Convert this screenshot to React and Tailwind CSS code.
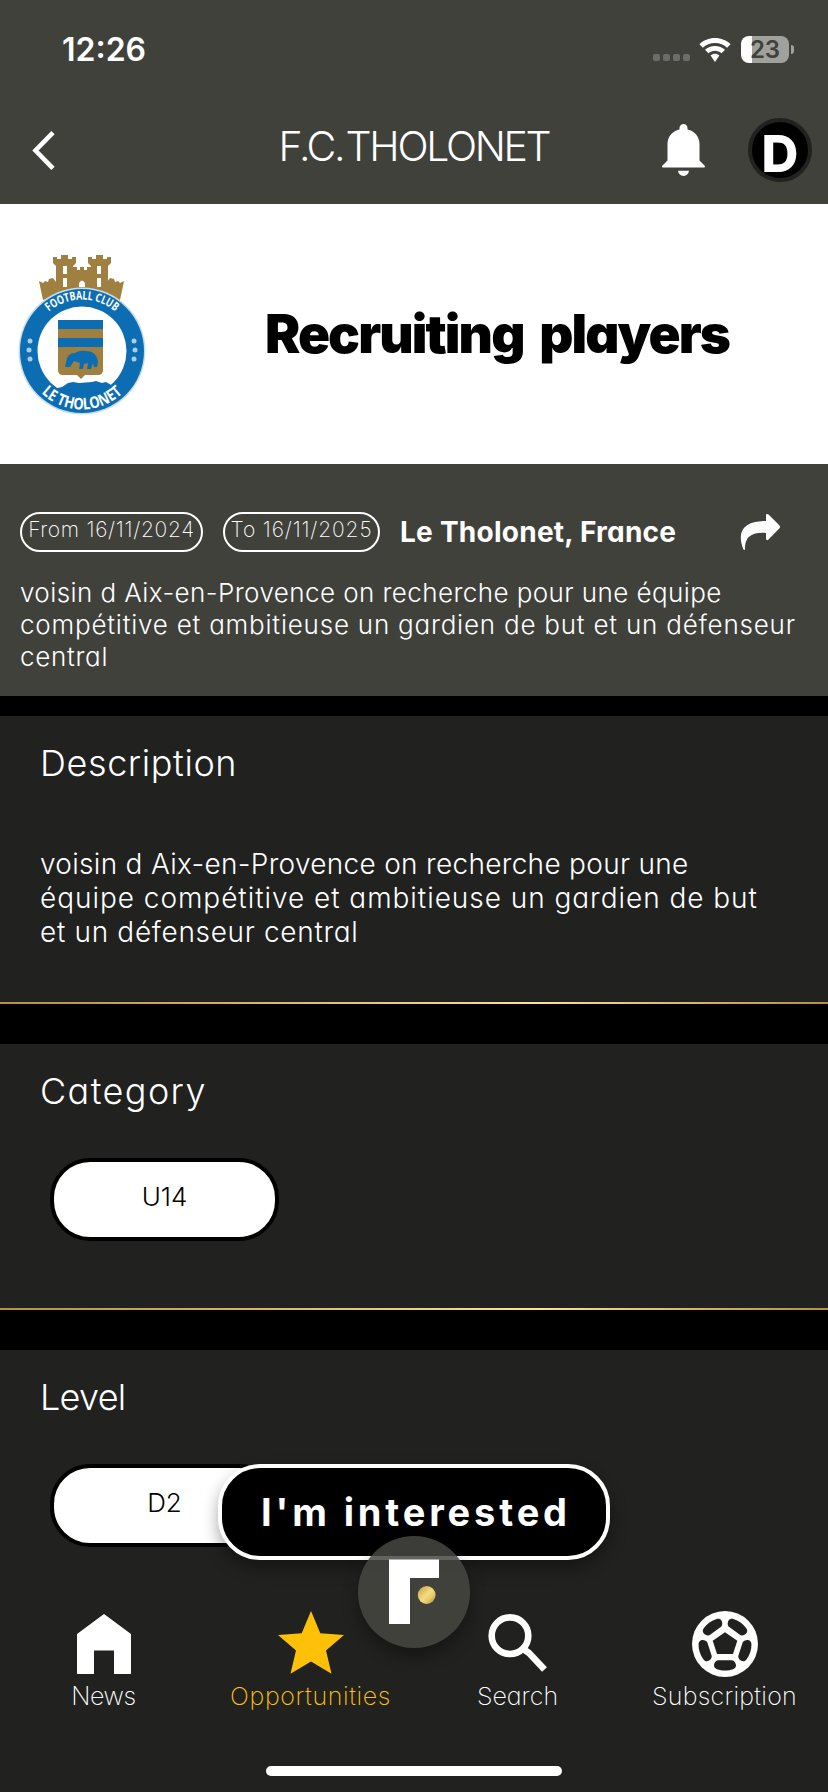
import React from 'react';

const SUMMARY = [
  { text: 'voisin d Aix-en-Provence on recherche pour une équipe', spacing: 'tracking-[0.420px]' },
  { text: 'compétitive et ambitieuse un gardien de but et un défenseur', spacing: 'tracking-[0.780px]' },
  { text: 'central', spacing: 'tracking-[0.700px]' },
];

const DESCRIPTION = [
  { text: 'voisin d Aix-en-Provence on recherche pour une', spacing: 'tracking-[0.300px]' },
  { text: 'équipe compétitive et ambitieuse un gardien de but', spacing: 'tracking-[0.960px]' },
  { text: 'et un défenseur central', spacing: 'tracking-[0.680px]' },
];

function StatusBar() {
  return (
    <div className="flex h-24 items-start justify-between pl-[62px] pr-[34px]">
      <span className="mt-[34px] text-[32px] leading-8 font-semibold">12:26</span>
      <div className="mt-9 flex h-[27px] items-center">
        <div className="mt-[16px] mr-[9px] flex gap-[3px]">
          {[0, 1, 2, 3].map((dot) => (
            <span key={dot} className="size-[7px] rounded-[2px] bg-[#6c6c68]" />
          ))}
        </div>
        <svg className="mr-2.5 h-6 w-8" viewBox="0 0 32 24" fill="#fff">
          <path d="M16 0C22 0 27.5 2.3 31.6 6.2L28.2 9.7C25 6.7 20.7 4.9 16 4.9S7 6.7 3.800 9.700L.4 6.200C4.500 2.300 10 0 16 0Z" />
          <path d="M16 7.900c3.900 0 7.400 1.500 10 3.900l-3.500 3.500C20.800 13.700 18.500 12.700 16 12.700s-4.800 1-6.500 2.600L6 11.800c2.600-2.400 6.100-3.900 10-3.900Z" />
          <path d="M16 15.700c1.700 0 3.200.6 4.400 1.700L16 24l-4.400-6.600c1.200-1.100 2.700-1.700 4.400-1.700Z" />
        </svg>
        <div className="flex h-[27px] w-12 items-center justify-center rounded-[8px] bg-linear-to-r from-white from-[11px] to-[#a0a09d] to-[11px] text-[24px] font-semibold text-[#41413c]">
          23
        </div>
        <span className="ml-0.5 h-[9px] w-[3px] rounded-r-full bg-[#a0a09d]" />
      </div>
    </div>
  );
}

function Header() {
  return (
    <header className="h-[204px] bg-[#41413c]">
      <StatusBar />
      <div className="grid h-[108px] grid-cols-[1fr_auto_1fr] items-center px-4">
        <svg className="ml-4 h-[39px] w-[23px]" viewBox="0 0 23 39" fill="none" stroke="#fff" strokeWidth="4.600">
          <path d="M21 1.700 3.500 19.500 21 37.300" />
        </svg>
        <h1 className="pb-[9px] text-[41px] leading-[50px] font-light tracking-[-2.300px] [word-spacing:-7px]">
          F.C. THOLONET
        </h1>
        <div className="flex items-center justify-end gap-[43px]">
          <svg className="h-[52px] w-[43px]" viewBox="0 0 43 52" fill="#fff">
            <path d="M21.500 0c2.300 0 4 1.700 4 4v1.500C33 7.300 37.500 13 37.500 20v16.500l5 5c.9 1 .4 2-.8 2H1.300c-1.200 0-1.700-1-.8-2l5-5V20C5.500 13 10 7.300 17.500 5.500V4c0-2.300 1.700-4 4-4Z" />
            <path d="M16 46.700h11c-.5 3.200-2.500 5.200-5.500 5.200S16.500 49.900 16 46.700Z" />
          </svg>
          <div className="flex size-16 items-center justify-center rounded-full border-4 border-[#21211f] bg-black">
            <span className="mt-1.5 text-[51px] leading-none font-extrabold">D</span>
          </div>
        </div>
      </div>
    </header>
  );
}

function Crest() {
  return (
    <svg className="h-[180px] w-[146px]" viewBox="0 14 146 180">
      <defs>
        <path id="crest-top" d="M30.500 121A51.500 51.500 0 0 1 133.500 121" />
        <path id="crest-bottom" d="M23.500 121A58.500 58.500 0 0 0 140.500 121" />
      </defs>
      {/* castle */}
      <g fill="#a08040">
        <path d="M39 51l4 2 2-2 3 1 1-3 4-1 3 4v14l-13 4Z" />
        <path d="M124 51l-4 2-2-2-3 1-1-3-4-1-3 4v14l13 4Z" />
        <path d="M53 27h4v2h4v-4h7v4h4v-2h4v6l-3 3v28H56V36l-3-3Z" />
        <path d="M88 27h4v2h4v-4h7v4h4v-2h4v6l-3 3v28H91V36l-3-3Z" />
        <path d="M73 37h4v3h3v-3h4v3h3v-3h4v26H73Z" />
      </g>
      <path d="M63 36h4v8h-4zM63 48h4v9h-4zM97 36h4v8h-4zM97 48h4v9h-4zM79 57v-4q3-5 6 0v4z" fill="#fff" />
      <circle cx="82" cy="121" r="63.500" fill="#c5ddec" />
      <circle cx="82" cy="121" r="62" fill="#0d6db3" />
      <circle cx="82" cy="121" r="44.500" fill="#fff" />
      {/* mountain behind the shield */}
      <path d="M53 159l9-2 6-4 5-1 6 1 13-1 4-1 6 2 4-1 7 4 2 3-13 12-20 4-17-4Z" fill="#0d6db3" />
      <path d="M58 90h45v50q0 5-5 5H85l-4 4-4-4H63q-5 0-5-5Z" fill="#a08040" />
      <path d="M58 90h45v9H58zM58 108h45v9H58z" fill="#0d6db3" />
      <path d="M65 137l2-9q2-5 8-5 4-3 11-2 7 0 10 5 3 4 1 11h-3l-1-4-2 6h-4l1-6-4 1-1 5h-4l1-6-6-2-4 6h-3Z" fill="#0d6db3" />
      <g fill="#a8cde6">
        <circle cx="30" cy="111" r="2.500" />
        <circle cx="29" cy="120" r="2.500" />
        <circle cx="30" cy="129" r="2.500" />
        <circle cx="134" cy="111" r="2.500" />
        <circle cx="135" cy="120" r="2.500" />
        <circle cx="134" cy="129" r="2.500" />
      </g>
      <g fill="#fff" fontFamily="Open Sans, sans-serif" fontWeight="700" textAnchor="middle">
        <text fontSize="12" textLength="72" lengthAdjust="spacingAndGlyphs">
          <textPath href="#crest-top" startOffset="50%">FOOTBALL CLUB</textPath>
        </text>
        <text fontSize="16" textLength="90" lengthAdjust="spacingAndGlyphs">
          <textPath href="#crest-bottom" startOffset="50%">LE THOLONET</textPath>
        </text>
      </g>
    </svg>
  );
}

function Banner() {
  return (
    <section className="flex h-[260px] items-center bg-white text-black">
      <div className="w-[166px] shrink-0">
        <Crest />
      </div>
      <h2 className="flex-1 text-center text-[53px] leading-[60px] font-black tracking-[-1.900px] whitespace-nowrap [word-spacing:7px]">
        Recruiting players
      </h2>
    </section>
  );
}

function Summary() {
  return (
    <section className="h-[232px] bg-[#41413c] px-5 pt-12">
      <div className="flex h-10 items-center">
        <span className="flex h-10 w-[183px] justify-center rounded-full border-2 border-white text-[21px] leading-[31px] font-extralight tracking-[0.700px] whitespace-nowrap">
          From 16/11/2024
        </span>
        <span className="ml-5 flex h-10 w-[157px] justify-center rounded-full border-2 border-white text-[21px] leading-[31px] font-extralight tracking-[0.850px] whitespace-nowrap">
          To 16/11/2025
        </span>
        <span className="ml-5 w-[320px] text-[28px] leading-10 font-bold tracking-[0.250px] whitespace-nowrap">
          Le Tholonet, France
        </span>
        <svg className="ml-5 h-9 w-10" viewBox="0 0 40 36" fill="#fff">
          <path d="M26 1.200C26 0 27.500-.4 28.500.6L39.300 11.300c1 1 1 2.200 0 3.200L28.500 25.600c-1 1-2.500.5-2.500-.8V19C13 18 4.500 22 5 35.200c0 1-1.300 1-1.700 0C-4 16 5 7 26 7Z" />
        </svg>
      </div>
      <div className="mt-[25px] text-[26px] leading-8 font-light whitespace-nowrap">
        {SUMMARY.map((line) => (
          <p key={line.text} className={line.spacing}>{line.text}</p>
        ))}
      </div>
    </section>
  );
}

function Section({ title, spacing, className, children }) {
  return (
    <section className={`bg-[#21211f] px-10 pt-6 ${className}`}>
      <h3 className={`text-[36px] leading-[46px] font-light ${spacing}`}>{title}</h3>
      {children}
    </section>
  );
}

function GoldDivider() {
  return (
    <div className="h-[42px] bg-black">
      <div className="h-0.5 bg-linear-to-r from-[#b98f3c] via-[#fbe48d] via-65% to-[#b98f3c]" />
    </div>
  );
}

function Chip({ children }) {
  return (
    <div className="ml-2.5 flex h-[83px] w-[229px] justify-center rounded-[40px] border-4 border-black bg-white text-[26px] leading-[69px] font-light text-black">
      {children}
    </div>
  );
}

function HomeIcon() {
  return (
    <svg className="h-[66px] w-[66px]" viewBox="0 0 66 66" fill="#fff">
      <path d="M33 3 60 23v40H43V39.500H23V63H6V23Z" />
    </svg>
  );
}

function StarIcon() {
  return (
    <svg className="h-[66px] w-[66px]" viewBox="0 0 66 66" fill="#ffc107">
      <path d="M33 0 42.300 22.300 66 24 48 39.500 53.500 62.700 33 50.500 12.500 62.700 18 39.500 0 24 23.700 22.300Z" />
    </svg>
  );
}

function SearchIcon() {
  return (
    <svg className="h-[66px] w-[66px]" viewBox="0 0 66 66" fill="none" stroke="#fff">
      <circle cx="25" cy="24.700" r="18.300" strokeWidth="6.600" />
      <path d="M39 38.500 44 42 59.500 58.500" strokeWidth="6.600" />
    </svg>
  );
}

function BallIcon() {
  return (
    <svg className="h-[66px] w-[66px]" viewBox="0 0 66 66">
      <circle cx="33" cy="33" r="33" fill="#fff" />
      <g fill="#21211f">
        <path d="M33 21.200 45.300 29.700 41 43H25L20.700 29.700Z" />
        {[0, 72, 144, 216, 288].map((angle) => (
          <path
            key={angle}
            transform={`rotate(${angle} 33 33)`}
            d="M26 49.300h14c2 0 4 3 4 5.200 0 1.500-1 3-3 3.700-5 1.800-11 1.800-16 0-2-.7-3-2.200-3-3.700 0-2.200 2-5.200 4-5.200Z"
          />
        ))}
      </g>
    </svg>
  );
}

const TABS = [
  { label: 'News', Icon: HomeIcon, color: 'text-white', spacing: 'tracking-[-0.400px]' },
  { label: 'Opportunities', Icon: StarIcon, color: 'text-[#ffc107]', spacing: 'tracking-[0.600px]' },
  { label: 'Search', Icon: SearchIcon, color: 'text-white', spacing: 'tracking-[0px]' },
  { label: 'Subscription', Icon: BallIcon, color: 'text-white', spacing: 'tracking-[0.250px]' },
];

function TabBar() {
  return (
    <nav className="relative flex h-[200px] flex-col items-center bg-[#21211f]">
      <div className="grid w-full grid-cols-4 pt-[19px]">
        {TABS.map(({ label, Icon, color, spacing }) => (
          <div key={label} className={`flex flex-col items-center ${color}`}>
            <Icon />
            <span className={`mt-[4px] text-[25px] leading-[31px] font-extralight whitespace-nowrap ${spacing}`}>{label}</span>
          </div>
        ))}
      </div>
      <div className="mt-[54px] h-2.5 w-[296px] rounded-full bg-white" />
    </nav>
  );
}

function FloatingActions() {
  return (
    <div className="absolute top-[1464px] left-1/2 flex -translate-x-1/2 flex-col items-center">
      <button className="h-24 w-[392px] rounded-[42px] border-4 border-white bg-black pt-px pl-1 text-[38px] font-bold tracking-[3.850px] whitespace-nowrap shadow-[0_8px_16px_rgba(0,0,0,0.35)]">
        I'm interested
      </button>
      <div className="-mt-6 size-28 rounded-full bg-[#464642]/85 shadow-[0_8px_16px_rgba(0,0,0,0.35)]">
        <svg className="size-28" viewBox="0 0 112 112">
          <defs>
            <linearGradient id="gold" x1="0" y1="0" x2="1" y2="1">
              <stop offset="0" stopColor="#c29a42" />
              <stop offset="0.500" stopColor="#f5dc80" />
              <stop offset="0.700" stopColor="#e6c765" />
              <stop offset="1" stopColor="#a67c2c" />
            </linearGradient>
          </defs>
          <path d="M31 23.500h50V42H52v46H31Z" fill="#fff" />
          <circle cx="68.700" cy="59" r="8.900" fill="url(#gold)" />
        </svg>
      </div>
    </div>
  );
}

export default function App() {
  return (
    <div className="relative h-[1792px] w-[828px] overflow-hidden bg-black font-['Inter',sans-serif] text-white [font-feature-settings:'cv11']">
      <Header />
      <Banner />
      <Summary />
      <div className="h-5 bg-black" />
      <Section title="Description" spacing="tracking-[0.600px]" className="h-[286px]">
        <div className="mt-[61px] text-[28px] leading-[34px] font-light whitespace-nowrap">
          {DESCRIPTION.map((line) => (
            <p key={line.text} className={line.spacing}>{line.text}</p>
          ))}
        </div>
      </Section>
      <GoldDivider />
      <Section title="Category" spacing="tracking-[1.400px]" className="h-[264px]">
        <div className="pt-11">
          <Chip>U14</Chip>
        </div>
      </Section>
      <GoldDivider />
      <Section title="Level" spacing="tracking-[-0.700px]" className="h-[242px]">
        <div className="pt-11">
          <Chip>D2</Chip>
        </div>
      </Section>
      <TabBar />
      <FloatingActions />
    </div>
  );
}
